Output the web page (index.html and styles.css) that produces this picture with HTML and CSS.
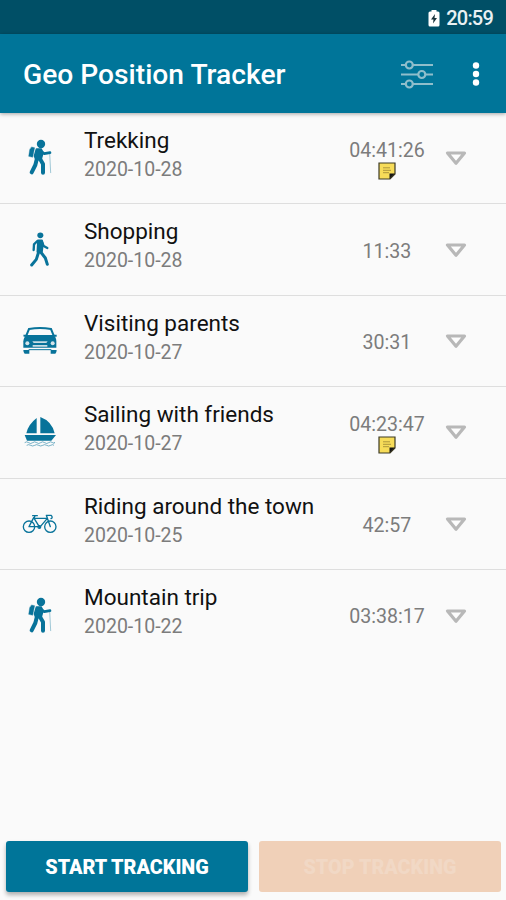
FILE: index.html
```
<!DOCTYPE html>
<html lang="en">
<head>
<meta charset="utf-8">
<title>Geo Position Tracker</title>
<link rel="stylesheet" href="styles.css">
</head>
<body>
<svg class="defs" width="0" height="0">
  <symbol id="hiker" viewBox="0 0 180 180">
    <g transform="translate(0 4)" fill="currentColor" stroke="currentColor" stroke-linecap="round" stroke-linejoin="round">
      <circle cx="93" cy="44" r="12.5" stroke="none"/>
      <path d="M65 53l9 2-6 29-12-3 3-20z" stroke-width="1"/>
      <path d="M79 59h15l5 12-5 18-17 1-4-10z" stroke-width="4"/>
      <path d="M92 64l11 9 17-3" fill="none" stroke-width="8"/>
      <path d="M81 87l-5 20-11 22M89 87l10 17v26" fill="none" stroke-width="12"/>
      <path d="M119 70l3 60" fill="none" stroke-width="2.5" opacity=".45"/>
    </g>
  </symbol>
  <symbol id="walker" viewBox="0 0 180 180">
    <g fill="currentColor" stroke="currentColor" stroke-linecap="round" stroke-linejoin="round">
      <ellipse cx="91" cy="46" rx="9" ry="8.500" stroke="none"/>
      <path d="M84 61h12l3 10-3 24-14 1z" stroke-width="5"/>
      <path d="M82 63l-10 10-1 17M96 67l5 11 11 6" fill="none" stroke-width="7"/>
      <path d="M86 96l-7 22-14 17M92 96l14 18 6 19" fill="none" stroke-width="9"/>
    </g>
  </symbol>
  <symbol id="car" viewBox="0 0 180 180">
    <g transform="translate(0 4)">
      <path d="M48 72L57 50Q90 44 123 50l9 22" fill="none" stroke="currentColor" stroke-width="6"/>
      <path d="M40 67h10v6h-9zM130 67h10v6h-9z" fill="currentColor"/>
      <path d="M51 68h78q10 5 10 19v19H40V87q1-14 11-19z" fill="currentColor"/>
      <path d="M40 113h18v11H44q-4-3-4-11zM122 113h18q0 8-4 11h-14z" fill="currentColor"/>
      <path d="M56 112h68" stroke="currentColor" stroke-width="3"/>
      <circle cx="52" cy="93" r="6" fill="#d4e4ea"/>
      <circle cx="128" cy="93" r="6" fill="#d4e4ea"/>
      <path d="M67 87h46l-4 5H71zM68 98h44v5H68z" fill="#c8dde4"/>
    </g>
  </symbol>
  <symbol id="boat" viewBox="0 0 180 180">
    <g fill="currentColor">
      <path d="M80 48v46H49q5-26 31-46zM91 45q35 13 43 49H91z"/>
      <path d="M44 99h94l-14 17H51z"/>
      <path d="M44 122q6-5 12 0t12 0 12 0 12 0 12 0 12 0 12 0 6-2M50 130q6-4 12 0t12 0 12 0 12 0 12 0 12 0 10 0" fill="none" stroke="currentColor" stroke-width="2.5" opacity=".65"/>
    </g>
  </symbol>
  <symbol id="bike" viewBox="0 0 180 180">
    <g fill="none" stroke="currentColor" stroke-width="4" stroke-linecap="round" stroke-linejoin="round">
      <circle cx="57" cy="98" r="17"/>
      <circle cx="121" cy="98" r="17"/>
      <path d="M57 98l14-27 18 29 23-27H74M57 98h32M121 98l-12-34h14q7 6 0 10M68 65h14M75 65l-3 8"/>
      <circle cx="88" cy="99" r="4"/>
    </g>
  </symbol>
  <symbol id="arrow" viewBox="0 0 24 18">
    <path d="M3.500 4h17L12 14.300z" fill="#fdfdfd" stroke="#b8b8b8" stroke-width="3.200" stroke-linejoin="round"/>
  </symbol>
  <symbol id="note" viewBox="0 0 18 18">
    <path d="M1 1h16v11l-5 5H1z" fill="#f7dc59" stroke="#3d3a24" stroke-width="1.200"/>
    <path d="M17 11.500h-5.500V17z" fill="#171717"/>
    <path d="M5 5.800h7M5 8.300h8M5 10.700h6" stroke="#a58e38" stroke-width=".9"/>
  </symbol>
</svg>
<main class="app">
  <div class="status">
    <svg class="battery" width="12" height="18" viewBox="0 0 12 18"><path d="M3.500 1h5v1.500H10q1.500 0 1.500 1.500v12q0 1.500-1.500 1.500H2Q.5 17.500.5 16V4Q.5 2.500 2 2.500h1.500z" fill="#fff"/><path d="M7 5L3 10.600h2.500L5 14.500l4-5.500H6.500z" fill="#17323a"/></svg>
    <span>20:59</span>
  </div>
  <header class="toolbar">
    <h1>Geo Position Tracker</h1>
    <svg class="tune" width="34" height="30" viewBox="0 0 34 30" fill="none" stroke="#8fbecb" stroke-width="2.200"><path d="M1 6h5M13 6h20M1 15.500h17M25 15.500h8M1 25h5M13 25h20"/><circle cx="9.300" cy="6" r="3.500"/><circle cx="21.800" cy="15.500" r="3.500"/><circle cx="9.300" cy="25" r="3.500"/></svg>
    <svg class="more" width="8" height="26" viewBox="0 0 8 26" fill="#fff"><circle cx="4" cy="4.500" r="3.200"/><circle cx="4" cy="13" r="3.200"/><circle cx="4" cy="21.500" r="3.200"/></svg>
  </header>
  <ul class="tracks">
    <li><svg class="icon"><use href="#hiker"/></svg><div class="info"><h2>Trekking</h2><p>2020-10-28</p></div><div class="time"><span>04:41:26</span><svg class="note"><use href="#note"/></svg></div><svg class="arrow"><use href="#arrow"/></svg></li>
    <li><svg class="icon"><use href="#walker"/></svg><div class="info"><h2>Shopping</h2><p>2020-10-28</p></div><div class="time"><span>11:33</span></div><svg class="arrow"><use href="#arrow"/></svg></li>
    <li><svg class="icon"><use href="#car"/></svg><div class="info"><h2>Visiting parents</h2><p>2020-10-27</p></div><div class="time"><span>30:31</span></div><svg class="arrow"><use href="#arrow"/></svg></li>
    <li><svg class="icon"><use href="#boat"/></svg><div class="info"><h2>Sailing with friends</h2><p>2020-10-27</p></div><div class="time"><span>04:23:47</span><svg class="note"><use href="#note"/></svg></div><svg class="arrow"><use href="#arrow"/></svg></li>
    <li><svg class="icon"><use href="#bike"/></svg><div class="info"><h2>Riding around the town</h2><p>2020-10-25</p></div><div class="time"><span>42:57</span></div><svg class="arrow"><use href="#arrow"/></svg></li>
    <li><svg class="icon"><use href="#hiker"/></svg><div class="info"><h2>Mountain trip</h2><p>2020-10-22</p></div><div class="time"><span>03:38:17</span></div><svg class="arrow"><use href="#arrow"/></svg></li>
  </ul>
  <footer class="actions">
    <button class="start">START TRACKING</button>
    <button class="stop" disabled>STOP TRACKING</button>
  </footer>
</main>
</body>
</html>
```
FILE: styles.css
```
* { box-sizing: border-box; margin: 0; padding: 0; }
body { font-family: Roboto, "Liberation Sans", sans-serif; background: #fafafa; }
.defs { display: none; }
.app { width: 506px; height: 900px; display: flex; flex-direction: column; overflow: hidden; }
.status {
  height: 34px; background: #004f66; color: #e9f1f3;
  display: flex; align-items: center; justify-content: flex-end; gap: 6px;
  padding: 2px 13px 0 0; font-size: 20px; font-weight: 500; letter-spacing: -.8px; line-height: 24px;
}
.battery { display: block; }
.toolbar {
  height: 79px; background: #007599; color: #fff;
  display: flex; align-items: center; padding: 0 26px 0 23px;
  box-shadow: 0 1px 4px rgba(0, 0, 0, .35);
}
.toolbar h1 { flex: 1; font-size: 28.2px; font-weight: 500; line-height: 34px; padding-top: 3px; white-space: nowrap; }
.tune { margin-right: 38px; }
.tracks { list-style: none; flex: 1; }
.tracks li {
  height: 91.4px; display: flex; align-items: center;
  padding: 0 38px 0 10px; border-bottom: 1.5px solid #dedede;
}
.tracks li:last-child { border-bottom: 0; }
.icon { width: 60px; height: 60px; color: #08739a; }
.info { flex: 1; padding-left: 14px; align-self: flex-start; padding-top: 13px; }
.info h2 { font-size: 22.5px; font-weight: 400; line-height: 28px; color: #111; white-space: nowrap; }
.info p { font-size: 19.5px; line-height: 28px; color: #7c7c7c; padding-top: 2px; }
.time {
  width: 90px; display: flex; flex-direction: column; align-items: center;
  font-size: 19.6px; line-height: 23px; color: #7c7c7c; padding-top: 3px;
}
.tracks li:last-child .time { padding-top: 1px; }
.note { width: 18px; height: 18px; }
.arrow { width: 24px; height: 18px; margin-left: 12px; }
.actions { display: flex; gap: 11px; padding: 0 5px 8px 6px; }
.actions button {
  flex: 1; height: 51px; border: 0; border-radius: 3px;
  font: 900 19.8px/24px Roboto, sans-serif; color: #fff; padding-top: 3px;
}
.start { background: #007599; box-shadow: 0 3px 4px rgba(0, 0, 0, .3); }
.actions .stop { background: #f0d0b8; color: #f1d8c5; }
```
